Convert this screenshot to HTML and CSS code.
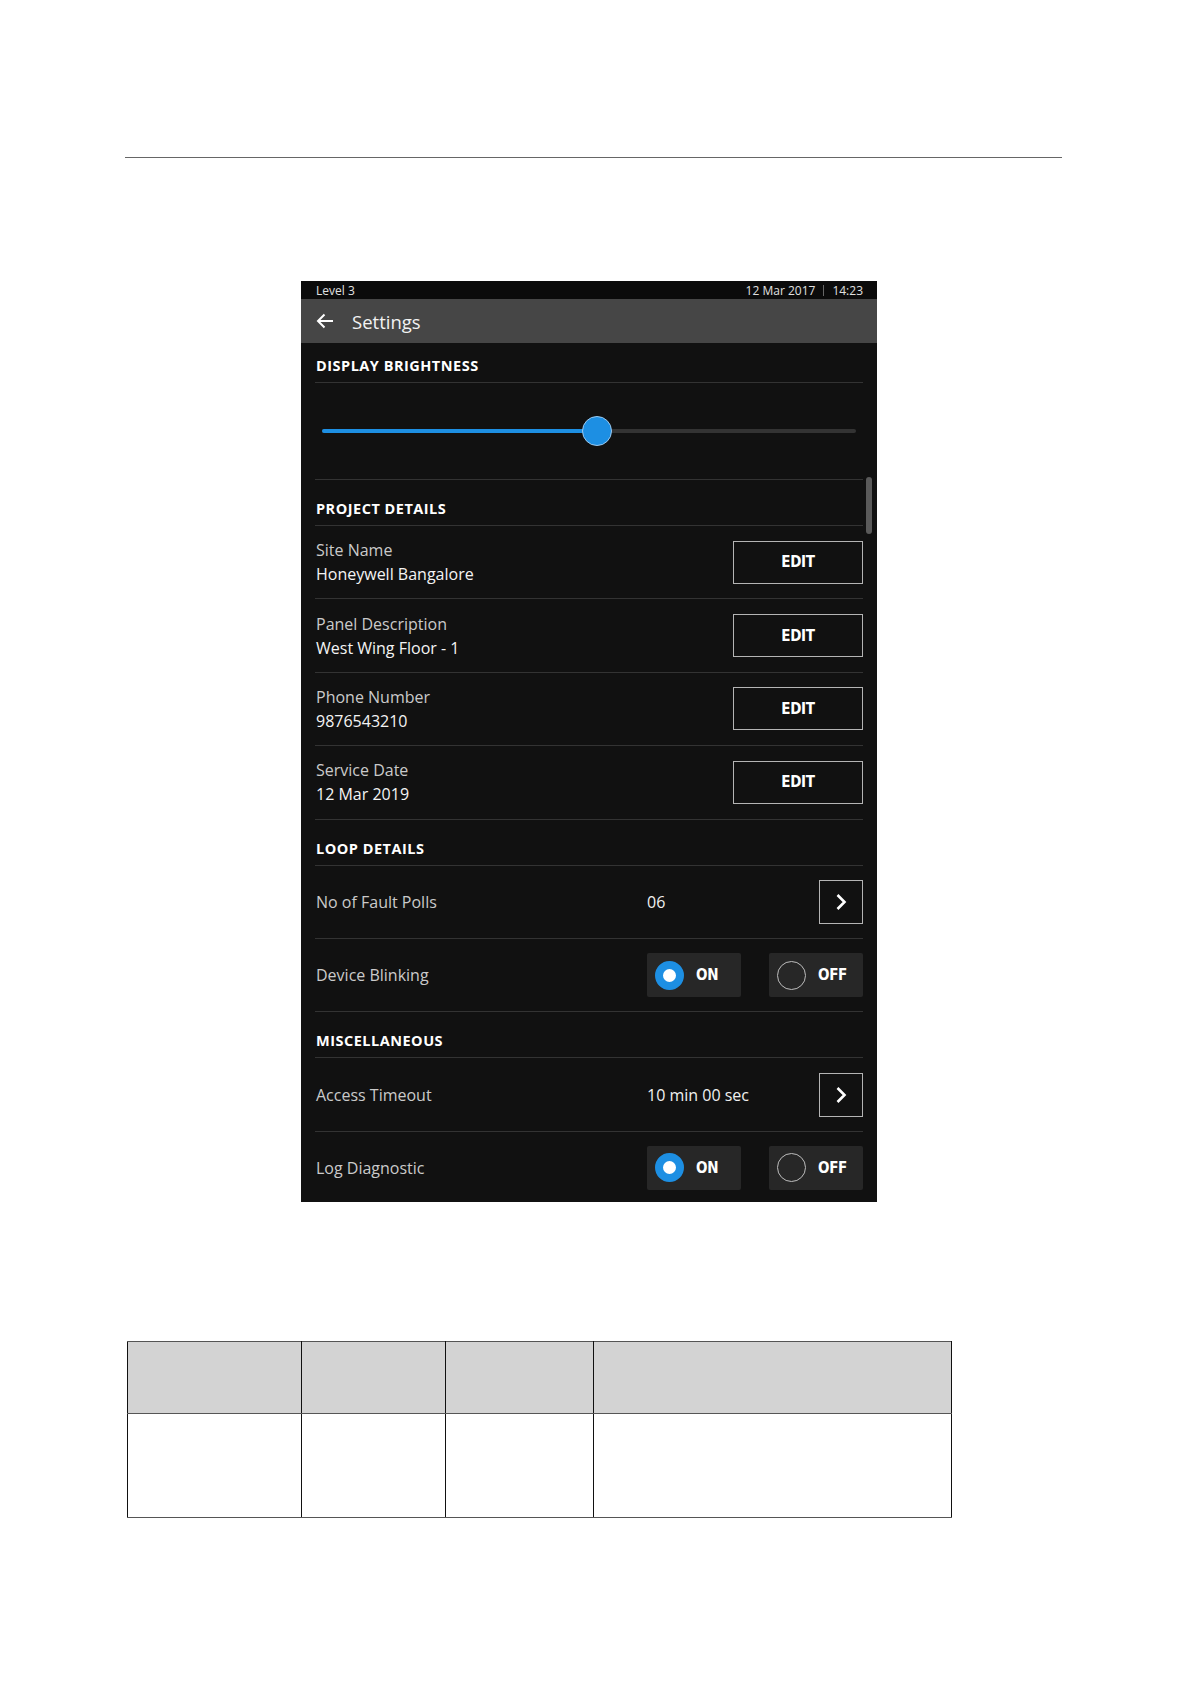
FILE: index.html
```html
<!DOCTYPE html>
<html>
<head>
<meta charset="utf-8">
<title>Settings</title>
<link rel="stylesheet" href="styles.css">
</head>
<body>
<div class="rule"></div>

<div class="device">
  <div class="statusbar">
    <span>Level 3</span>
    <span class="clock">12 Mar 2017<span class="sep"></span>14:23</span>
  </div>
  <div class="appbar">
    <svg class="back" width="18" height="16" viewBox="0 0 18 16"><path d="M17 8H2M8.5 1.5L2 8l6.5 6.5" fill="none" stroke="#fff" stroke-width="2"/></svg>
    <span class="title">Settings</span>
  </div>
  <div class="content">
    <div class="sect first">DISPLAY BRIGHTNESS</div>
    <div class="sliderblock">
      <div class="track">
        <div class="fill" style="width:51.5%"></div>
        <div class="thumb" style="left:51.5%"></div>
      </div>
    </div>

    <div class="sect">PROJECT DETAILS</div>
    <div class="row">
      <div class="field"><div class="label">Site Name</div><div class="value">Honeywell Bangalore</div></div>
      <div class="edit">EDIT</div>
    </div>
    <div class="row">
      <div class="field"><div class="label">Panel Description</div><div class="value">West Wing Floor - 1</div></div>
      <div class="edit">EDIT</div>
    </div>
    <div class="row">
      <div class="field"><div class="label">Phone Number</div><div class="value">9876543210</div></div>
      <div class="edit">EDIT</div>
    </div>
    <div class="row">
      <div class="field"><div class="label">Service Date</div><div class="value">12 Mar 2019</div></div>
      <div class="edit">EDIT</div>
    </div>

    <div class="sect">LOOP DETAILS</div>
    <div class="row">
      <div class="label">No of Fault Polls</div>
      <div class="right">
        <span class="val">06</span>
        <div class="go"><svg width="12" height="18" viewBox="0 0 12 18"><path d="M2.5 2l7 7-7 7" fill="none" stroke="#fff" stroke-width="2.6"/></svg></div>
      </div>
    </div>
    <div class="row">
      <div class="label">Device Blinking</div>
      <div class="right">
        <div class="opt"><span class="radio on"></span><span class="optlabel">ON</span></div>
        <div class="opt"><span class="radio"></span><span class="optlabel">OFF</span></div>
      </div>
    </div>

    <div class="sect">MISCELLANEOUS</div>
    <div class="row">
      <div class="label">Access Timeout</div>
      <div class="right">
        <span class="val">10 min 00 sec</span>
        <div class="go"><svg width="12" height="18" viewBox="0 0 12 18"><path d="M2.5 2l7 7-7 7" fill="none" stroke="#fff" stroke-width="2.6"/></svg></div>
      </div>
    </div>
    <div class="row">
      <div class="label">Log Diagnostic</div>
      <div class="right">
        <div class="opt"><span class="radio on"></span><span class="optlabel">ON</span></div>
        <div class="opt"><span class="radio"></span><span class="optlabel">OFF</span></div>
      </div>
    </div>
  </div>
  <div class="scrollbar"></div>
</div>

<table class="grid">
  <tr class="head"><td class="c1"></td><td class="c2"></td><td class="c3"></td><td class="c4"></td></tr>
  <tr class="body"><td></td><td></td><td></td><td></td></tr>
</table>
</body>
</html>
```

FILE: styles.css
```css
html, body {
  margin: 0;
  padding: 0;
  background: #fff;
}
body {
  font-family: "Open Sans", "Noto Sans", sans-serif;
}
.rule {
  margin: 157px 0 0 125px;
  width: 937px;
  height: 0;
  border-top: 1px solid #666;
}
.device {
  position: relative;
  margin: 123px 0 0 301px;
  width: 576px;
  height: 921px;
  overflow: hidden;
  background: #111;
  color: #eee;
}
.statusbar {
  height: 18px;
  background: #0b0b0b;
  display: flex;
  justify-content: space-between;
  align-items: center;
  padding: 0 14px 0 15px;
  font-size: 12px;
  color: #e0e0e0;
}
.clock {
  display: flex;
  align-items: center;
}
.sep {
  display: inline-block;
  width: 1px;
  height: 11px;
  background: #666;
  margin: 0 8px 0 8px;
}
.appbar {
  height: 44px;
  background: #464646;
  display: flex;
  align-items: center;
  padding-left: 15px;
}
.back {
  display: block;
  margin-right: 18px;
}
.title {
  font-size: 18.5px;
  color: #f2f2f2;
}
.content {
  padding: 0 14px;
}
.sect {
  padding: 20px 0 7px 1px;
  line-height: 18px;
  font-size: 14.5px;
  font-weight: 700;
  letter-spacing: 0.5px;
  color: #fff;
  border-bottom: 1px solid #333;
}
.sect.first {
  padding-top: 14px;
}
.sliderblock {
  height: 96px;
  border-bottom: 1px solid #333;
  display: flex;
  align-items: center;
  padding: 0 7px;
}
.track {
  position: relative;
  flex: 1;
  height: 4px;
  background: #333;
  border-radius: 2px;
}
.fill {
  height: 100%;
  background: #1d8fe3;
  border-radius: 2px;
}
.thumb {
  position: absolute;
  top: 50%;
  width: 28px;
  height: 28px;
  margin: -15px 0 0 -15px;
  border-radius: 50%;
  background: #1d8fe3;
  border: 1px solid #9cc9ee;
}
.row {
  height: 72.4px;
  border-bottom: 1px solid #333;
  display: flex;
  align-items: center;
  justify-content: space-between;
}
.field {
  line-height: 24px;
  padding-left: 1px;
}
.label {
  font-size: 16px;
  color: #cacaca;
  padding-left: 1px;
}
.field .label {
  padding-left: 0;
}
.value {
  font-size: 16px;
  color: #f4f4f4;
}
.edit {
  width: 128px;
  height: 41px;
  border: 1px solid #b4b4b4;
  display: flex;
  align-items: center;
  justify-content: center;
  font-family: "DejaVu Sans Condensed", "Roboto", sans-serif;
  font-stretch: condensed;
  font-weight: 700;
  font-size: 15px;
  letter-spacing: -0.3px;
  color: #fff;
}
.right {
  width: 216px;
  display: flex;
  align-items: center;
  justify-content: space-between;
}
.val {
  font-size: 16px;
  color: #f0f0f0;
}
.go {
  width: 42px;
  height: 42px;
  border: 1px solid #b4b4b4;
  display: flex;
  align-items: center;
  justify-content: center;
}
.go svg {
  display: block;
}
.opt {
  width: 94px;
  height: 44px;
  background: #272727;
  border-radius: 2px;
  display: flex;
  align-items: center;
  padding-left: 8px;
  box-sizing: border-box;
}
.radio {
  width: 27px;
  height: 27px;
  border-radius: 50%;
  border: 1px solid #bdbdbd;
  box-sizing: content-box;
  margin-right: 12px;
}
.radio.on {
  width: 13px;
  height: 13px;
  border: 8px solid #1d8fe3;
  background: #fff;
}
.optlabel {
  font-family: "DejaVu Sans Condensed", "Roboto", sans-serif;
  font-stretch: condensed;
  font-weight: 700;
  font-size: 15px;
  letter-spacing: -0.3px;
  color: #fff;
}
.scrollbar {
  position: absolute;
  left: 565px;
  top: 196px;
  width: 6px;
  height: 57px;
  border-radius: 3px;
  background: #5a5a5a;
}
.grid {
  margin: 139px 0 0 127px;
  border-collapse: collapse;
  table-layout: fixed;
  width: 825px;
}
.grid td {
  padding: 0;
  border-left: 1px solid #111;
  border-right: 1px solid #111;
  border-top: 1px solid #555;
  border-bottom: 1px solid #555;
}
.grid .c1 { width: 173px; }
.grid .c2 { width: 143px; }
.grid .c3 { width: 147px; }
.grid .head td {
  height: 71px;
  background: #d3d3d3;
}
.grid .body td {
  height: 103px;
  background: #fff;
}
```
